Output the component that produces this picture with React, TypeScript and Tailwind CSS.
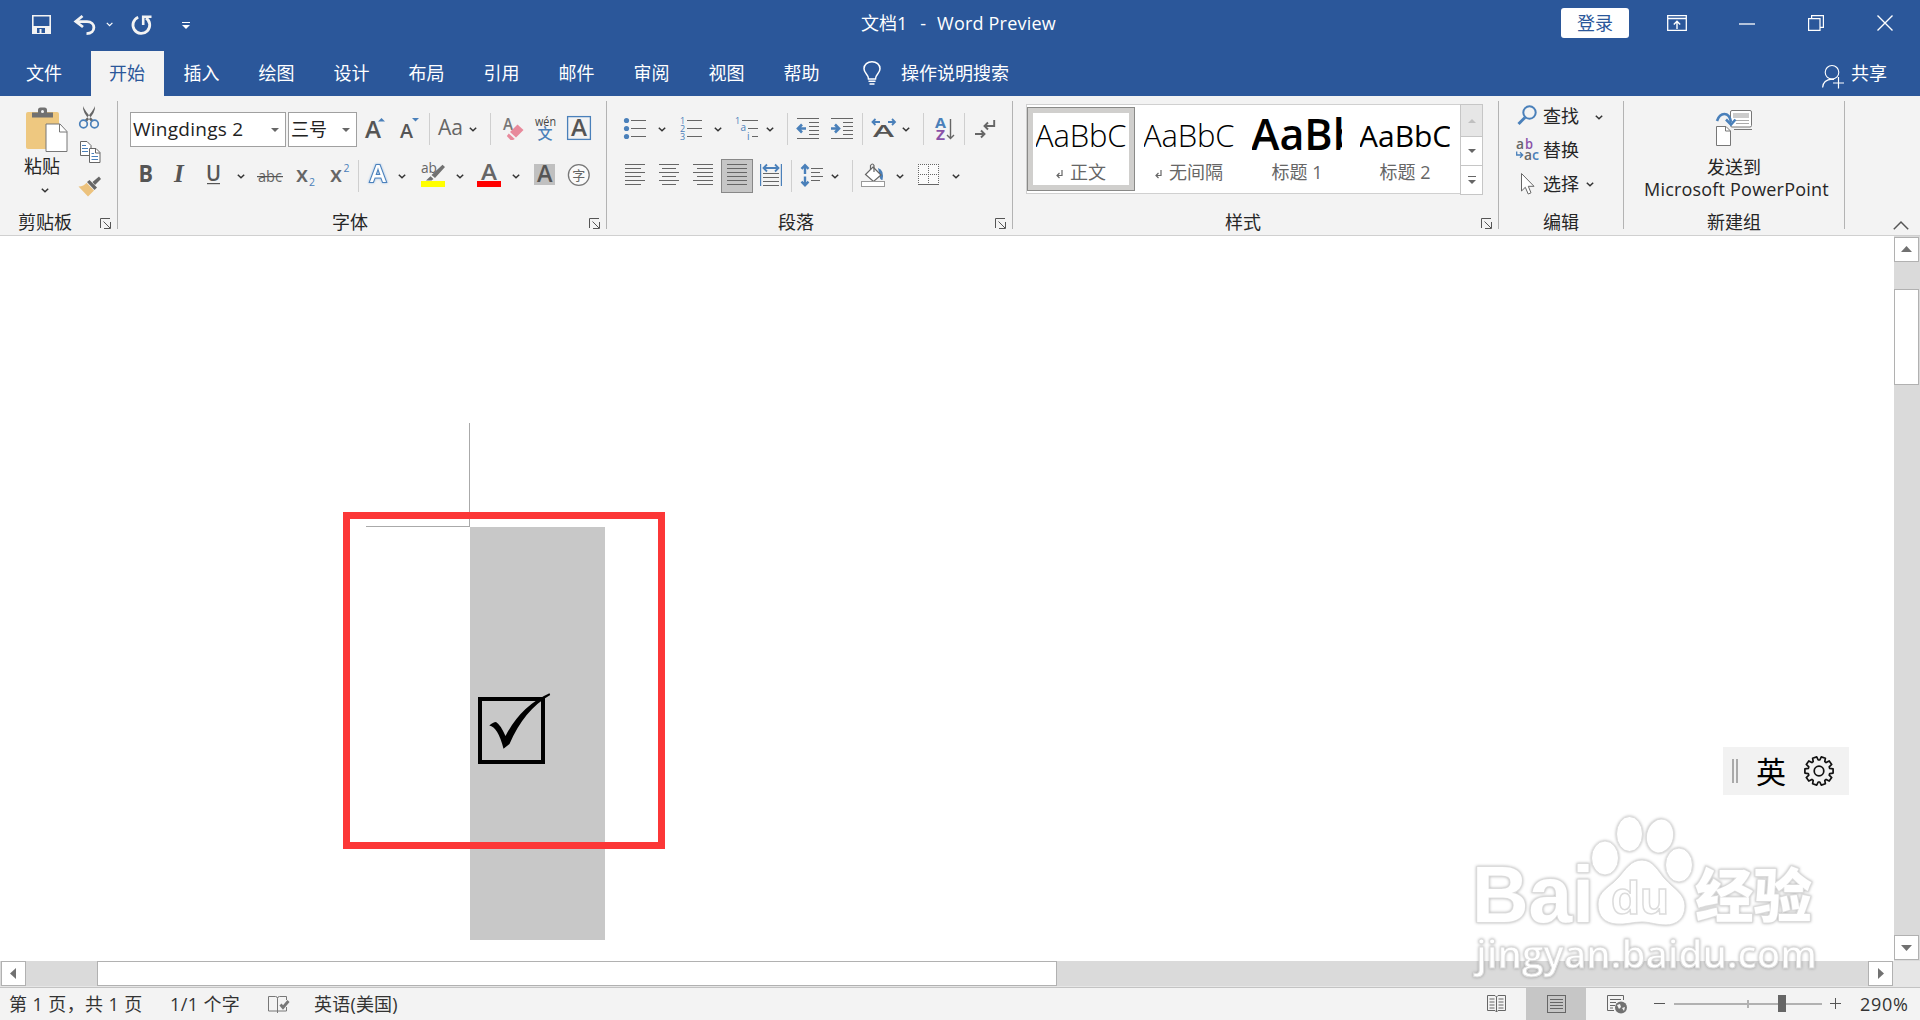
import React from "react";

type IconProps = { className?: string };

const BLUE = "#4a80ba";
const GRAY = "#666666";

const TABS = ["插入", "绘图", "设计", "布局", "引用", "邮件", "审阅", "视图", "帮助"];

const Svg: React.FC<{
  w: number;
  h?: number;
  className?: string;
  children: React.ReactNode;
}> = ({ w, h = 24, className = "", children }) => (
  <svg
    width={w}
    height={h}
    viewBox={`0 0 ${w} ${h}`}
    fill="none"
    className={`shrink-0 overflow-visible ${className}`}
  >
    {children}
  </svg>
);

const Chevron: React.FC<IconProps> = ({ className }) => (
  <Svg w={8} h={5} className={className}>
    <path d="M0.8 0.8 L4 3.8 L7.2 0.8" stroke="#333" strokeWidth="1.5" />
  </Svg>
);

const Caret: React.FC<IconProps & { color?: string }> = ({ className, color = "#666" }) => (
  <Svg w={8} h={4} className={className}>
    <path d="M0 0 H8 L4 4 Z" fill={color} />
  </Svg>
);

const Divider: React.FC<IconProps> = ({ className = "" }) => (
  <div className={`w-px h-8 shrink-0 bg-[#cfcfcf] ${className}`}></div>
);

/* horizontal rules given as [x1, x2, y] */
const Rules: React.FC<{ lines: number[][]; color?: string }> = ({ lines, color = GRAY }) => (
  <>
    {lines.map(([x1, x2, y], i) => (
      <rect key={i} x={x1} y={y} width={x2 - x1} height={1} fill={color} />
    ))}
  </>
);

const Letter: React.FC<{
  x: number;
  y: number;
  size: number;
  fill?: string;
  weight?: number;
  children: React.ReactNode;
  width?: number;
}> = ({ x, y, size, fill = "#555", weight = 600, children, width }) => (
  <text
    x={x}
    y={y}
    fontSize={size}
    fill={fill}
    fontWeight={weight}
    textLength={width}
    lengthAdjust="spacingAndGlyphs"
  >
    {children}
  </text>
);

const Group: React.FC<{
  label: string;
  className: string;
  labelClass: string;
  launcher?: boolean;
  children: React.ReactNode;
}> = ({ label, className, labelClass, launcher = true, children }) => (
  <div className={`mt-[5px] h-32 border-r border-[#b3b3b3] shrink-0 flex flex-col ${className}`}>
    <div className="h-[110px] shrink-0">{children}</div>
    <div className="h-5 shrink-0 flex items-start">
      <span className={`leading-[22px] ${labelClass}`}>{label}</span>
      {launcher && (
        <Svg w={11} h={11} className="ml-auto mr-[6px] mt-[7px]">
          <path d="M0.5 10 V0.5 H10 M3.5 3.5 L10 10 M10.5 4 V10.5 H4" stroke="#555" />
        </Svg>
      )}
    </div>
  </div>
);

const TitleBar = () => (
  <div className="h-[51px] shrink-0 flex text-white">
    <div className="w-[861px] flex pt-[15px]">
      <Svg w={20} h={20} className="ml-8">
        <path d="M0.8 0.8 H18.2 V18.2 H0.8 Z" stroke="#f3f3f3" strokeWidth="1.6" />
        <path d="M1 11 H18.5 V18.5 H1 Z" fill="#f3f3f3" />
        <path d="M5 13 H13 V18 H5 Z" fill="#2b579a" />
        <path d="M7.5 14 H9.5 V18 H7.5 Z" fill="#f3f3f3" />
      </Svg>
      <Svg w={22} h={20} className="ml-[22px]">
        <path d="M8.5 1 L1.8 6.5 L9 12" stroke="#f3f3f3" strokeWidth="2.8" />
        <path d="M2 6.6 H13 C22 6.6 22.5 18.4 12.5 18.6" stroke="#f3f3f3" strokeWidth="2.8" />
      </Svg>
      <Svg w={8} h={5} className="ml-[10px] mt-[7px]">
        <path d="M0.8 0.8 L3.6 3.6 L6.4 0.8" stroke="#fff" strokeWidth="1.2" />
      </Svg>
      <Svg w={21} h={20} className="ml-[17px]">
        <path d="M7.2 2.2 A8.4 8.4 0 1 0 15 3" stroke="#f3f3f3" strokeWidth="2.8" />
        <path d="M12.2 10 V1.8 H20.5" stroke="#f3f3f3" strokeWidth="2.6" />
      </Svg>
      <Svg w={8} h={8} className="ml-[30px] mt-[7px]">
        <path d="M0 0.5 H8" stroke="#fff" />
        <path d="M0 3 H8 L4 7 Z" fill="#fff" />
      </Svg>
    </div>
    <div className="w-[700px] pt-[9px] leading-7 flex">
      <span>文档1</span>
      <span className="ml-[13px]">-</span>
      <span className="ml-[11px] tracking-[0.2px]">Word Preview</span>
    </div>
    <div className="mt-2 w-[68px] h-[30px] rounded-[3px] bg-white text-[#2b579a] text-center leading-[31px]">
      登录
    </div>
    <Svg w={20} h={16} className="ml-[38px] mt-[15px]">
      <path d="M0.7 0.7 H19.3 V15.3 H0.7 Z M1 3.5 H19" stroke="#fff" strokeWidth="1.3" />
      <path d="M10 14 V6.5 M6.8 9.5 L10 6.3 L13.2 9.5" stroke="#fff" strokeWidth="1.4" />
    </Svg>
    <Svg w={16} h={2} className="ml-[52px] mt-[23px]">
      <path d="M0 1 H16" stroke="#fff" strokeWidth="1.3" />
    </Svg>
    <Svg w={16} h={16} className="ml-[53px] mt-[15px]">
      <path d="M0.6 3.6 H12 V15.4 H0.6 Z M3.6 3.5 V0.7 H15.4 V12.4 H12" stroke="#fff" strokeWidth="1.2" />
    </Svg>
    <Svg w={16} h={16} className="ml-[53px] mt-[15px]">
      <path d="M0.5 0.5 L15.5 15.5 M15.5 0.5 L0.5 15.5" stroke="#fff" strokeWidth="1.4" />
    </Svg>
  </div>
);

const TabBar = () => (
  <div className="h-[45px] shrink-0 flex text-white leading-[45px]">
    <div className="w-[91px] pl-[26px]">文件</div>
    <div className="w-[73px] bg-[#f3f3f3] text-[#2b579a] pl-[18px]">开始</div>
    {TABS.map((tab) => (
      <div key={tab} className="w-[75px] text-center">
        {tab}
      </div>
    ))}
    <Svg w={18} h={24} className="ml-6 mt-[10px]">
      <path
        d="M5.5 18 C5.5 13 1 12.5 1 7.8 C1 3.5 4.6 0.8 9 0.8 C13.4 0.8 17 3.5 17 7.8 C17 12.5 12.5 13 12.5 18 Z"
        stroke="#fff"
        strokeWidth="1.5"
      />
      <path d="M5.5 20.3 H12.5 M6.5 23 H11.5" stroke="#fff" strokeWidth="1.4" />
    </Svg>
    <div className="ml-5">操作说明搜索</div>
    <Svg w={22} h={24} className="ml-auto mt-[14px]">
      <ellipse cx="10" cy="7.3" rx="6.8" ry="6.8" stroke="#fff" strokeWidth="1.1" />
      <path d="M0.6 22.5 C1 17 4 14.6 10 14.2 L12 14.5 M16.5 12 V23.5 M11 18 H22" stroke="#fff" strokeWidth="1.2" />
    </Svg>
    <div className="ml-[7px] mr-[33px]">共享</div>
  </div>
);

const ClipboardGroup = () => (
  <Group label="剪贴板" className="w-[118px]" labelClass="ml-[18px]">
    <div className="flex">
      <div className="w-[78px] flex flex-col">
        <Svg w={42} h={45} className="ml-[26px] mt-[6px]">
          <rect x="0" y="5" width="33" height="37" rx="2" fill="#eec880" />
          <path d="M6 10.5 V5.5 H12 V3 Q12 0.5 14.5 0.5 H18.5 Q21 0.5 21 3 V5.5 H27 V10.5 Z" fill="#717171" />
          <circle cx="16.5" cy="4.5" r="1.5" fill="#f3f3f3" />
          <path d="M20 17 H34 L41 24.5 V44.5 H20 Z" fill="#fff" stroke="#777" />
          <path d="M33.5 17 V25 H41" stroke="#777" />
        </Svg>
        <span className="ml-6 mt-1 leading-5">粘贴</span>
        <Chevron className="ml-[41px] mt-3" />
      </div>
      <div className="flex flex-col">
        <Svg w={22} h={23} className="mt-[5px]">
          <path d="M5 0 Q6 4 16 15 L13 15.5 Q4 6 5 0 Z M17 0 Q16 4 6 15 L9 15.5 Q18 6 17 0 Z" fill="#666" />
          <circle cx="5.5" cy="18" r="3.8" stroke={BLUE} strokeWidth="1.7" />
          <circle cx="16.5" cy="18" r="3.8" stroke={BLUE} strokeWidth="1.7" />
        </Svg>
        <Svg w={22} h={23} className="mt-3 ml-[2px]">
          <path d="M0.5 0.5 H7 L11 4.5 V14.5 H0.5 Z" fill="#fff" stroke={GRAY} />
          <path d="M2 4.5 H6 M2 7.5 H8 M2 10.5 H8" stroke={BLUE} />
          <path d="M9.5 7.5 H16 L20 11.5 V21.5 H9.5 Z" fill="#fff" stroke={GRAY} />
          <path d="M15.5 7.5 V12 H20" stroke={GRAY} />
          <path d="M11.5 12.5 H14 M11.5 15.5 H18 M11.5 18.5 H18" stroke={BLUE} />
        </Svg>
        <Svg w={24} h={21} className="mt-3">
          <path d="M0.5 10.5 Q6 10.5 8.5 6.8 L16 14.5 L10 20.5 Z" fill="#ecc27d" />
          <path d="M9 6 L11.5 4 L19 11.5 L16.5 14 Z" fill="#666" />
          <path d="M14.5 6 L21 0.5 L23 3 L17 9 Z" fill="#666" />
        </Svg>
      </div>
    </div>
  </Group>
);

const FontGroup = () => (
  <Group label="字体" className="w-[489px]" labelClass="ml-[214px]">
    <div className="mt-[10px] h-9 flex items-center">
      <div className="ml-3 mt-px w-[156px] h-[35px] border border-[#a0a0a0] bg-white flex items-center pl-[2px] pr-[6px]">
        <span className="text-[19px] text-[#222] tracking-[0.25px]">Wingdings 2</span>
        <Caret className="ml-auto" />
      </div>
      <div className="ml-[2px] mt-px w-[69px] h-[35px] border border-[#a0a0a0] bg-white flex items-center pl-[2px] pr-[6px]">
        <span className="text-[#222]">三号</span>
        <Caret className="ml-auto" />
      </div>
      <Svg w={21} className="ml-2">
        <Letter x={0} y={20.5} size={23} width={16}>A</Letter>
        <path d="M13 4.5 L16.5 1 L20 4.5 Z" fill={BLUE} />
      </Svg>
      <Svg w={21} className="ml-[13px]">
        <Letter x={1} y={20.5} size={20} width={13}>A</Letter>
        <path d="M13 1 H20 L16.5 4.5 Z" fill={BLUE} />
      </Svg>
      <Divider className="ml-[9px]" />
      <Svg w={26} className="ml-2">
        <Letter x={0} y={17.5} size={21} width={25} fill="#666" weight={500}>Aa</Letter>
      </Svg>
      <Chevron className="ml-[5px]" />
      <Divider className="ml-[13px]" />
      <Svg w={21} className="ml-3">
        <Letter x={0} y={13} size={16} fill="#777" width={10}>A</Letter>
        <path d="M14.5 7.5 L20.5 13 L13 20.5 L7 15 Z" fill="#e8899b" />
        <path d="M5.8 16.5 L11.8 22 L10 23 H7.5 L3.8 19 Z" fill="#e8899b" />
      </Svg>
      <Svg w={22} className="ml-[10px]">
        <Letter x={1} y={8.5} size={12} width={21} fill="#444" weight={500}>wén</Letter>
        <Letter x={3.5} y={22} size={15} fill={BLUE} weight={500}>文</Letter>
      </Svg>
      <Svg w={24} className="ml-[11px]">
        <rect x="0.6" y="-0.4" width="22.8" height="22.8" stroke={BLUE} strokeWidth="1.3" />
        <Letter x={4} y={19} size={23} width={16}>A</Letter>
      </Svg>
    </div>
    <div className="mt-3 h-[34px] flex items-center">
      <Svg w={16} className="ml-5">
        <Letter x={0.5} y={18} size={23} width={14.5} weight={700}>B</Letter>
      </Svg>
      <Svg w={14} className="ml-[18px]">
        <text x="2" y="18" fontSize="25" fill="#555" fontWeight="700" fontStyle="italic" fontFamily="Liberation Serif, serif">
          I
        </text>
      </Svg>
      <Svg w={16} className="ml-[19px]">
        <Letter x={1} y={16.5} size={21} width={15} weight={600}>U</Letter>
        <rect x="2" y="19" width="13" height="1.2" fill="#555" />
      </Svg>
      <Chevron className="ml-4" />
      <Svg w={26} className="ml-3">
        <Letter x={1} y={18} size={17} width={24} fill="#666" weight={400}>abc</Letter>
        <rect x="0" y="12" width="26" height="1.2" fill="#555" />
      </Svg>
      <Svg w={21} className="ml-3">
        <Letter x={1} y={18} size={21} width={12} fill="#666">x</Letter>
        <Letter x={14} y={22} size={11} width={6} fill={BLUE} weight={500}>2</Letter>
      </Svg>
      <Svg w={21} className="ml-[13px]">
        <Letter x={1} y={18} size={21} width={12} fill="#666">x</Letter>
        <Letter x={14.5} y={7.5} size={11} width={6} fill={BLUE} weight={500}>2</Letter>
      </Svg>
      <Divider className="ml-2" />
      <Svg w={21} className="ml-[9px]">
        <text
          x="2"
          y="18"
          fontSize="23"
          fontWeight="600"
          textLength="16"
          lengthAdjust="spacingAndGlyphs"
          fill="#fff"
          stroke={BLUE}
          strokeWidth="2"
          paintOrder="stroke"
          className="drop-shadow-[0_0_1px_#8ab4e4]"
        >
          A
        </text>
      </Svg>
      <Chevron className="ml-[9px]" />
      <Svg w={25} className="ml-[15px]">
        <Letter x={0} y={9} size={14} width={16} fill="#666" weight={500}>ab</Letter>
        <path d="M21.5 0.8 L24 3 L14 14 L10.5 11 Z M9.5 12.2 L12.5 15 L10.5 16.5 H5 Z" fill="#717171" />
        <rect x="0" y="17" width="24" height="6" fill="#ffff00" />
      </Svg>
      <Chevron className="ml-[10px]" />
      <Svg w={25} className="ml-[13px]">
        <Letter x={4} y={15.5} size={22} width={16} fill="#666">A</Letter>
        <rect x="0" y="17" width="24" height="6" fill="#ff0000" />
      </Svg>
      <Chevron className="ml-[10px]" />
      <Svg w={21} className="ml-[14px]">
        <rect x="0" y="0" width="21" height="21" fill="#c0c0c0" />
        <Letter x={3} y={18} size={23} width={15.5}>A</Letter>
      </Svg>
      <Svg w={23} className="ml-3">
        <circle cx="11.8" cy="11" r="10.4" fill="#fafafa" stroke="#777" strokeWidth="1.3" />
        <Letter x={5.3} y={16} size={13} fill="#666" weight={400}>字</Letter>
      </Svg>
    </div>
  </Group>
);

const ParagraphGroup = () => (
  <Group label="段落" className="w-[406px]" labelClass="ml-[171px]">
    <div className="mt-[10px] h-9 flex items-center">
      <Svg w={24} className="ml-4">
        {[3.5, 11.5, 19.5].map((y) => (
          <circle key={y} cx="3.5" cy={y} r="2.6" fill={BLUE} />
        ))}
        <Rules lines={[[8, 23, 3], [8, 23, 11], [8, 23, 19]]} />
      </Svg>
      <Chevron className="ml-[11px]" />
      <Svg w={24} className="ml-[13px]">
        <Letter x={1} y={6.5} size={9} fill={BLUE} weight={500}>1</Letter>
        <Letter x={1} y={14.5} size={9} fill={BLUE} weight={500}>2</Letter>
        <Letter x={1} y={22.5} size={9} fill={BLUE} weight={500}>3</Letter>
        <Rules lines={[[8, 23, 3], [8, 23, 11], [8, 23, 19]]} />
      </Svg>
      <Chevron className="ml-[11px]" />
      <Svg w={24} className="ml-[13px]">
        <Letter x={0} y={6.5} size={9} fill={BLUE} weight={500}>1</Letter>
        <Letter x={5.5} y={14} size={10} fill={BLUE} weight={500}>a</Letter>
        <Letter x={12} y={22.5} size={10} fill={BLUE} weight={500}>i</Letter>
        <Rules lines={[[7, 23, 3], [13, 23, 11], [17, 23, 19]]} />
      </Svg>
      <Chevron className="ml-[7px]" />
      <Divider className="ml-[13px]" />
      <Svg w={24} className="ml-2">
        <Rules lines={[[1, 23, 1], [13, 23, 5], [13, 23, 9], [13, 23, 13], [13, 23, 17], [1, 23, 21]]} />
        <path d="M10 11.5 H2 M6 7.5 L2 11.5 L6 15.5" stroke={BLUE} strokeWidth="2.6" />
      </Svg>
      <Svg w={24} className="ml-[10px]">
        <Rules lines={[[1, 23, 1], [13, 23, 5], [13, 23, 9], [13, 23, 13], [13, 23, 17], [1, 23, 21]]} />
        <path d="M1 11.5 H9 M5 7.5 L9 11.5 L5 15.5" stroke={BLUE} strokeWidth="2.6" />
      </Svg>
      <Divider className="ml-2" />
      <Svg w={25} className="ml-2">
        <path d="M9 5 H2 M4.5 2 L1.5 5 L4.5 8 M17 5 H24 M21 2 L24 5 L21 8" stroke={BLUE} strokeWidth="1.8" />
        <Letter x={2} y={20} size={17} width={21} weight={600}>A</Letter>
      </Svg>
      <Chevron className="ml-[6px]" />
      <Divider className="ml-[13px]" />
      <Svg w={21} className="ml-[11px]">
        <Letter x={0} y={11} size={14} width={11} fill={BLUE} weight={700}>A</Letter>
        <Letter x={1} y={22.5} size={14} width={9} fill="#8a52a8" weight={700}>Z</Letter>
        <path d="M15.5 2 V21.5 M12 18 L15.5 21.5 L19 18" stroke="#666" strokeWidth="1.4" />
      </Svg>
      <Divider className="ml-2" />
      <Svg w={21} className="ml-[10px]">
        <path d="M19.2 3 V9 H10 M13 5.5 L9.5 9 L13 12.5 M0 17 H9 M6 13.5 L9.5 17 L6 20.5" stroke="#666" strokeWidth="1.9" />
      </Svg>
    </div>
    <div className="mt-3 h-[34px] flex items-center">
      <Svg w={20} className="ml-[18px]">
        <Rules lines={[[0, 20, 0], [0, 16, 4], [0, 20, 8], [0, 16, 12], [0, 20, 16], [0, 16, 20]]} />
      </Svg>
      <Svg w={20} className="ml-[14px]">
        <Rules lines={[[0, 20, 0], [3, 17, 4], [0, 20, 8], [3, 17, 12], [0, 20, 16], [3, 17, 20]]} />
      </Svg>
      <Svg w={20} className="ml-[14px]">
        <Rules lines={[[0, 20, 0], [4, 20, 4], [0, 20, 8], [4, 20, 12], [0, 20, 16], [4, 20, 20]]} />
      </Svg>
      <div className="ml-2 w-8 h-[34px] border border-[#888] bg-[#c6c6c6] flex justify-center pt-1">
        <Svg w={20}>
          <Rules lines={[[0, 20, 0], [0, 20, 4], [0, 20, 8], [0, 20, 12], [0, 20, 16], [0, 20, 20]]} />
        </Svg>
      </div>
      <Svg w={22} className="ml-[7px]">
        <path d="M0.6 0 V22 M21.4 0 V22" stroke={BLUE} strokeWidth="1.2" />
        <path d="M3 4 H19 M7 0.5 L3.5 4 L7 7.5 M15 0.5 L18.5 4 L15 7.5" stroke={BLUE} strokeWidth="1.8" />
        <Rules lines={[[3, 19, 9], [3, 19, 13], [3, 19, 17], [3, 19, 21]]} />
      </Svg>
      <Divider className="ml-[9px]" />
      <Svg w={23} className="ml-[9px]">
        <path d="M4 1 V10 M0.5 4.8 L4 1.2 L7.5 4.8 M4 12.5 V21.5 M0.5 17.7 L4 21.3 L7.5 17.7" stroke={BLUE} strokeWidth="2.4" />
        <Rules lines={[[10, 22, 4], [10, 19, 8], [10, 22, 12], [10, 19, 16]]} />
      </Svg>
      <Chevron className="ml-[7px]" />
      <Divider className="ml-[13px]" />
      <Svg w={25} className="ml-2">
        <path d="M17 4 Q23.5 6 21.5 16 Q18.5 16 18.5 11 Z" fill={BLUE} />
        <path d="M12 3 L20 11 L12.5 17.5 L4.5 10.5 Z" fill="#fff" stroke={GRAY} strokeWidth="1.2" />
        <path d="M9.5 6 V1.5 Q11.5 -1.5 13 1.5 V8" stroke={GRAY} strokeWidth="1.2" />
        <rect x="0.5" y="17.5" width="23" height="5" fill="#fff" stroke="#999" />
      </Svg>
      <Chevron className="ml-[10px]" />
      <Svg w={22} className="ml-[14px]">
        <rect x="0" y="0" width="21" height="20" fill="#fafafa" />
        <path
          d="M0 0.5 H21 M0 10.5 H21 M0.5 0 V20 M10.5 0 V20 M20.5 0 V20"
          stroke={GRAY}
          strokeDasharray="1 1"
        />
        <rect x="0" y="20" width="21" height="1" fill={GRAY} />
      </Svg>
      <Chevron className="ml-3" />
    </div>
  </Group>
);

const StyleItem: React.FC<{
  sample: string;
  sampleClass: string;
  name: string;
  mark?: boolean;
  selected?: boolean;
}> = ({ sample, sampleClass, name, mark, selected }) => (
  <div
    className={`w-[108px] h-[84px] shrink-0 px-[9px] flex flex-col items-center ${
      selected ? "shadow-[inset_0_0_0_1px_#8a8a88,inset_0_0_0_6px_#d0cfcd]" : ""
    }`}
  >
    <div className="mt-[6px] w-[90px] h-[44px] overflow-hidden flex items-center text-black whitespace-nowrap">
      <span className={sampleClass}>{sample}</span>
    </div>
    <div className="mt-[5px] leading-5 text-[#666] flex items-center">
      {mark && (
        <Svg w={7} h={9} className="mr-[7px] mt-1">
          <path d="M6 0 V5.5 H1 M3.5 3 L1 5.5 L3.5 8" stroke="#666" strokeWidth="1.2" />
        </Svg>
      )}
      <span>{name}</span>
    </div>
  </div>
);

const StylesGroup = () => (
  <Group label="样式" className="w-[486px]" labelClass="ml-[212px]">
    <div className="ml-[13px] mt-[3px] flex">
      <div className="w-[434px] h-[90px] border border-r-0 border-[#d0d0d0] bg-white pt-[2px] flex">
        <StyleItem sample="AaBbC" sampleClass="text-[31px] font-light -ml-px tracking-[-0.2px]" name="正文" mark selected />
        <StyleItem sample="AaBbC" sampleClass="text-[31px] font-light -ml-px tracking-[-0.2px]" name="无间隔" mark />
        <StyleItem sample="AaBbC" sampleClass="text-[43px] font-semibold -ml-px -mt-[2px]" name="标题 1" />
        <StyleItem sample="AaBbC" sampleClass="text-[30px] font-normal -ml-px" name="标题 2" />
      </div>
      <div className="w-[23px] h-[91px] border border-[#c6c6c6] bg-white flex flex-col">
        <div className="h-8 bg-[#e6e6e6] border-b border-[#c6c6c6] flex justify-center items-center">
          <Caret className="rotate-180" color="#c0c0c0" />
        </div>
        <div className="h-[29px] border-b border-[#c6c6c6] flex justify-center items-center">
          <Caret />
        </div>
        <div className="flex-1 flex flex-col justify-center items-center gap-[3px]">
          <div className="w-2 h-px bg-[#666]"></div>
          <Caret />
        </div>
      </div>
    </div>
  </Group>
);

const EditGroup = () => (
  <Group label="编辑" className="w-[125px]" labelClass="ml-11" launcher={false}>
    <div className="h-[30px] flex items-center">
      <Svg w={23} className="ml-[17px]">
        <circle cx="13.5" cy="8.5" r="6.2" stroke={BLUE} strokeWidth="2" />
        <path d="M9 13.5 L2.5 20" stroke={BLUE} strokeWidth="3" />
      </Svg>
      <span className="ml-1">查找</span>
      <Chevron className="ml-4 mt-[2px]" />
    </div>
    <div className="mt-1 h-[30px] flex items-center">
      <Svg w={23} className="ml-[17px]">
        <Letter x={0} y={10.5} size={14} width={8} fill="#666">a</Letter>
        <Letter x={9} y={10.5} size={14} width={8} fill="#8a52a8">b</Letter>
        <Letter x={8} y={21.5} size={14} width={8} fill="#666">a</Letter>
        <Letter x={16} y={21.5} size={14} width={7} fill={BLUE}>c</Letter>
        <path d="M0.7 13.5 V17 H6 M4 14.3 L6.7 17 L4 19.7" stroke={BLUE} strokeWidth="1.3" />
      </Svg>
      <span className="ml-1">替换</span>
    </div>
    <div className="mt-1 h-[30px] flex items-center">
      <Svg w={23} className="ml-[17px]">
        <path
          d="M5.5 1.5 V19 L9.3 15.3 L12.2 22 L15 20.8 L12.3 14.3 H18 Z"
          fill="#fff"
          stroke="#666"
        />
      </Svg>
      <span className="ml-1">选择</span>
      <Chevron className="ml-[7px]" />
    </div>
  </Group>
);

const SendGroup = () => (
  <Group label="新建组" className="w-[221px]" labelClass="ml-[83px]" launcher={false}>
    <div className="flex flex-col">
      <Svg w={37} h={37} className="ml-[92px] mt-[9px]">
        <rect x="14.5" y="0.5" width="21" height="16.5" rx="1.5" fill="#fff" stroke="#777" />
        <rect x="17" y="3" width="16" height="5" fill="#ccc" />
        <path d="M20 10.5 H33 M20 13.5 H33" stroke="#aaa" />
        <path d="M18 19.5 H36" stroke="#777" />
        <path d="M1 11 C4 2 13 1 15 12" stroke={BLUE} strokeWidth="2.6" />
        <path d="M10 9.5 L15 14.5 L19.5 9.5" stroke={BLUE} strokeWidth="2.6" />
        <path d="M0.5 16.5 H10 L14.5 21 V35.5 H0.5 Z" fill="#fff" stroke="#777" />
        <path d="M9.5 16.5 V21 H14.5" stroke="#777" />
      </Svg>
      <span className="ml-[83px] mt-[10px] leading-5">发送到</span>
      <span className="ml-5 mt-[2px] leading-5 whitespace-nowrap tracking-[0.2px]">Microsoft PowerPoint</span>
    </div>
  </Group>
);

const Ribbon = () => (
  <div className="h-[140px] shrink-0 bg-[#f3f3f3] border-b border-[#d0d0d0] flex text-[#262626]">
    <ClipboardGroup />
    <FontGroup />
    <ParagraphGroup />
    <StylesGroup />
    <EditGroup />
    <SendGroup />
    <Svg w={16} h={9} className="ml-12 mt-[125px]">
      <path d="M0.8 8.3 L8 1 L15.2 8.3" stroke="#555" strokeWidth="1.5" />
    </Svg>
  </div>
);

const ScrollButton: React.FC<{ points: string; className?: string }> = ({ points, className = "" }) => (
  <div className={`w-[25px] h-[25px] shrink-0 border border-[#b1b1b1] bg-white ${className}`}>
    <Svg w={23} h={23}>
      <polygon points={points} fill="#717171" />
    </Svg>
  </div>
);

const Page = () => (
  <div className="h-[725px] shrink-0 flex bg-white">
    <div className="flex-1 flex pl-[366px] pt-[187px]">
      <div className="w-[104px] h-[104px] relative">
        <div className="w-[104px] h-[104px] border-r border-b border-[#aaa]"></div>
        <div className="absolute left-[-23px] top-[89px] w-[322px] h-[337px] border-[7px] border-[#fc3737] z-10"></div>
      </div>
      <div className="mt-[104px] w-[135px] h-[413px] bg-[#c8c8c8] pl-2 pt-[166px]">
        <Svg w={73} h={72}>
          <rect x="2" y="6" width="63" height="63" stroke="#000" strokeWidth="4" />
          <path
            d="M11.3 32.5 Q15 29 18 29 Q22 31 27.5 43 Q43 13 71.5 0.3 L72.2 2 Q46 17 31.5 51 Q29 53 25.5 55.8 Q20 34 11.3 32.5 Z"
            fill="#000"
          />
        </Svg>
      </div>
    </div>
    <div className="w-[26px] pt-px bg-[#dadada] flex flex-col">
      <ScrollButton points="6,14 17,14 11.5,8" />
      <div className="mt-[27px] w-[25px] h-24 border border-[#b1b1b1] bg-white"></div>
      <ScrollButton points="6,9 17,9 11.5,15" className="mt-auto mb-px" />
    </div>
  </div>
);

const HorizontalScroll = () => (
  <div className="h-[26px] shrink-0 flex bg-[#e6e6e6]">
    <div className="w-[1893px] h-[25px] flex bg-[#dadada]">
      <ScrollButton points="14,6 14,17 8,11.5" className="ml-px" />
      <div className="ml-[71px] w-[960px] border border-[#b1b1b1] bg-white"></div>
      <ScrollButton points="9,6 9,17 15,11.5" className="ml-auto" />
    </div>
  </div>
);

const StatusBar = () => (
  <div className="h-[33px] shrink-0 border-t border-[#c3c3c3] bg-[#f3f3f3] flex text-[#333] leading-8">
    <span className="ml-[9px] w-[161px] whitespace-nowrap tracking-[0.4px]">第 1 页，共 1 页</span>
    <span className="w-[98px] whitespace-nowrap tracking-[0.4px]">1/1 个字</span>
    <Svg w={22} h={19} className="mt-[7px]">
      <path d="M9.5 16 H0.5 V1.5 H7.5 Q9.5 1.5 9.5 3.5 V18 M9.5 3.5 Q9.5 1.5 11.5 1.5 H18.5 V5 M18.5 12 V16 H9.5" stroke="#777" />
      <path d="M12.5 9.5 L15 12.5 L20.5 6" stroke="#777" strokeWidth="2.8" />
    </Svg>
    <span className="ml-[24px] tracking-[0.2px]">英语(美国)</span>
    <Svg w={20} h={18} className="ml-auto mt-[7px]">
      <path d="M0.5 0.5 H8 L9.5 2 L11 0.5 H18.5 V15.5 H11 L9.5 17 L8 15.5 H0.5 Z M9.5 2 V17" stroke="#666" />
      <path d="M2.5 4 H7.5 M2.5 7 H7.5 M2.5 10 H7.5 M2.5 13 H7.5 M11.5 4 H16.5 M11.5 7 H16.5 M11.5 10 H16.5 M11.5 13 H16.5" stroke="#666" />
    </Svg>
    <div className="ml-[19px] w-[60px] bg-[#c6c6c6] flex justify-center pt-[7px]">
      <Svg w={19} h={18}>
        <rect x="0.5" y="0.5" width="18" height="17" stroke="#666" />
        <Rules lines={[[3, 16, 4], [3, 16, 7], [3, 16, 10], [3, 16, 13]]} />
      </Svg>
    </div>
    <Svg w={20} h={19} className="ml-[21px] mt-[7px]">
      <path d="M7 15.5 H0.5 V0.5 H16.5 V5" stroke="#666" />
      <path d="M3 4.5 H14 M3 7.5 H9 M3 10.5 H8 M3 13 H6" stroke="#666" />
      <circle cx="14" cy="12.5" r="6" fill="#717171" />
      <path d="M10 10 L13 9 L14 12 L12 14 Z M15 13 L18 12 L17 16 Z" fill="#f3f3f3" />
    </Svg>
    <div className="ml-[27px] mt-[15px] w-[11px] h-px bg-[#555]"></div>
    <div className="ml-[9px] w-[148px] h-[17px] mt-[7px] flex items-center">
      <div className="w-[73px] h-[2px] bg-[#b1b1b1]"></div>
      <div className="w-[2px] h-2 bg-[#b1b1b1]"></div>
      <div className="w-[29px] h-[2px] bg-[#b1b1b1]"></div>
      <div className="w-2 h-[17px] bg-[#666]"></div>
      <div className="flex-1 h-[2px] bg-[#b1b1b1]"></div>
    </div>
    <Svg w={11} h={11} className="ml-2 mt-[10px]">
      <path d="M5.5 0 V11 M0 5.5 H11" stroke="#555" />
    </Svg>
    <span className="ml-[19px] w-[60px] tracking-[0.7px]">290%</span>
  </div>
);

const gear = () => {
  const pts: string[] = [];
  for (let i = 0; i < 10; i++) {
    [[-0.24, 11], [-0.15, 14.3], [0.15, 14.3], [0.24, 11]].forEach(([off, r]) => {
      const a = ((i + 0.5) * Math.PI) / 5 + off;
      pts.push(`${(15 + r * Math.sin(a)).toFixed(1)},${(15 - r * Math.cos(a)).toFixed(1)}`);
    });
  }
  return pts.join(" ");
};

const ImeBar = () => (
  <div className="absolute left-[1723px] top-[747px] w-[126px] h-12 bg-[#f2f2f2] flex items-center">
    <div className="ml-[9px] w-[6px] h-6 border-x-2 border-[#aaa]"></div>
    <span className="ml-[18px] w-[30px] text-[30px] leading-[48px] pt-[2px] text-black">英</span>
    <Svg w={30} h={30} className="ml-[18px]">
      <polygon points={gear()} stroke="#111" strokeWidth="1.7" strokeLinejoin="round" />
      <circle cx="15" cy="15" r="4.8" stroke="#111" strokeWidth="1.7" />
    </Svg>
  </div>
);

const Watermark = () => (
  <svg
    width="370"
    height="180"
    viewBox="0 0 370 180"
    className="absolute left-[1460px] top-[805px] drop-shadow-[0_0_1.5px_rgba(0,0,0,0.3)]"
    fill="#fff"
    stroke="#dcdcdc"
    strokeWidth="1"
  >
    <g fontFamily="Liberation Sans, sans-serif" fontWeight="700">
      <text x="12" y="117" fontSize="79" textLength="122" lengthAdjust="spacingAndGlyphs" strokeWidth="2" paintOrder="stroke">
        Bai
      </text>
    </g>
    <ellipse cx="145" cy="53" rx="13.5" ry="17" />
    <ellipse cx="169.5" cy="29" rx="13" ry="17.5" />
    <ellipse cx="200" cy="31" rx="13.5" ry="17" transform="rotate(12 200 31)" />
    <ellipse cx="219" cy="60" rx="13.5" ry="17" />
    <path d="M182 55 C193 55 198 66 205 74 C214 84 225 89 225 101 C225 114 216 120 206 120 C196 120 190 117 182 117 C172 117 166 120 156 119 C145 118 138 112 138 99 C138 86 150 82 158 73 C166 64 171 55 182 55 Z" />
    <g fontFamily="Liberation Sans, sans-serif" fontWeight="700">
      <text x="151" y="109" fontSize="47" textLength="58" lengthAdjust="spacingAndGlyphs" strokeWidth="1.5">
        du
      </text>
    </g>
    <g fontFamily="Noto Sans CJK SC, sans-serif" fontWeight="900">
      <text x="235" y="112" fontSize="58" textLength="117" lengthAdjust="spacingAndGlyphs" strokeWidth="2" paintOrder="stroke">
        经验
      </text>
    </g>
    <g fontFamily="Open Sans, sans-serif" fontWeight="600">
      <text x="16" y="163" fontSize="38" textLength="341" lengthAdjust="spacingAndGlyphs">
        jingyan.baidu.com
      </text>
    </g>
  </svg>
);

const App: React.FC = () => {
  return (
    <div className="relative w-[1920px] h-[1020px] overflow-hidden flex flex-col bg-[#2b579a] text-[18px] font-['Open_Sans','Noto_Sans_CJK_SC',sans-serif]">
      <TitleBar />
      <TabBar />
      <Ribbon />
      <Page />
      <HorizontalScroll />
      <StatusBar />
      <ImeBar />
      <Watermark />
    </div>
  );
};

export default App;
